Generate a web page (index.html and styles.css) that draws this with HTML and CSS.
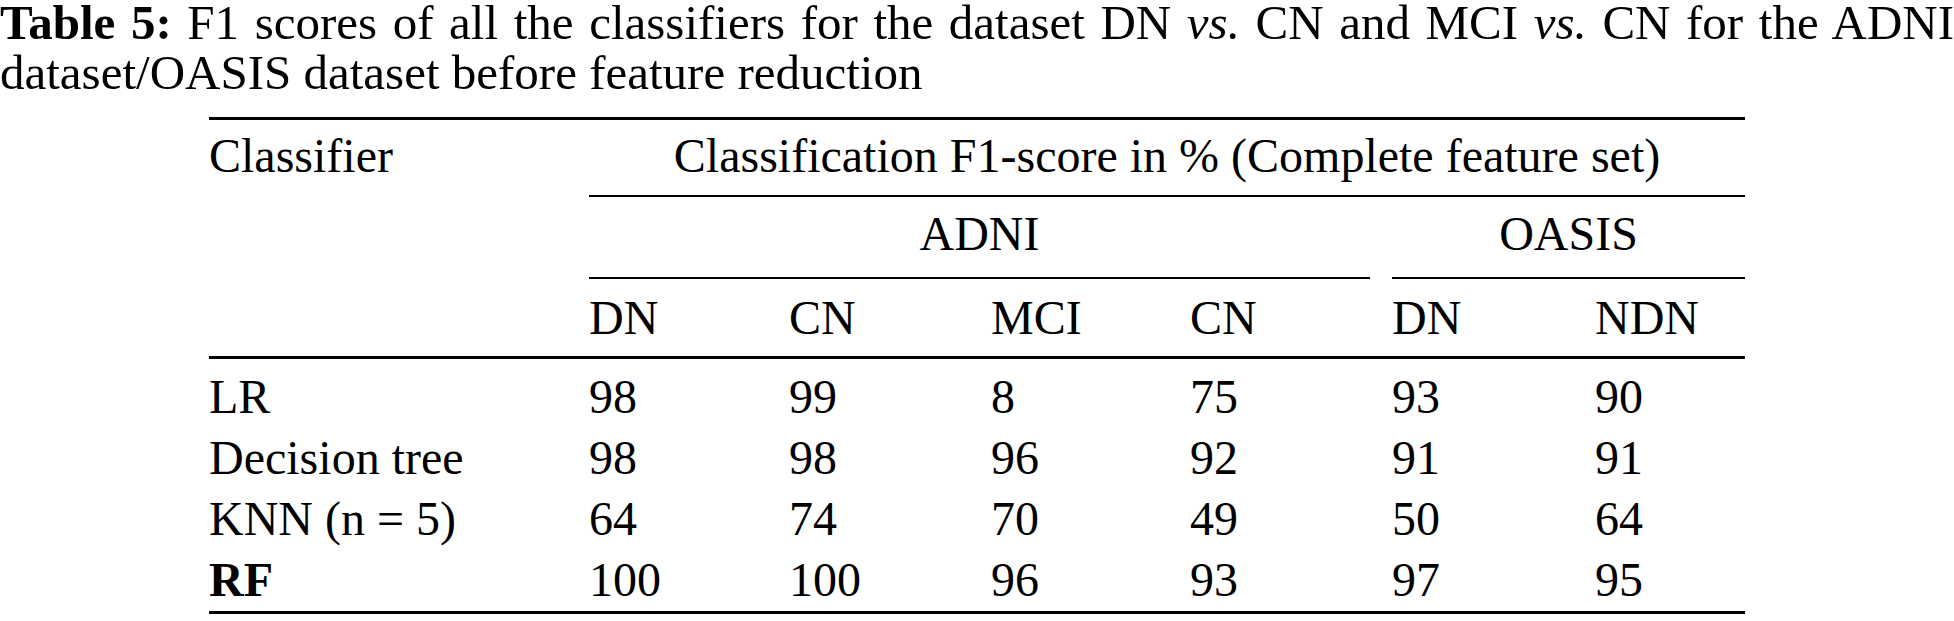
FILE: index.html
```html
<!DOCTYPE html>
<html lang="en">
<head>
    <meta charset="UTF-8">
    <meta name="viewport" content="width=device-width, initial-scale=1.0">
    <title>Table 5</title>
    <link rel="stylesheet" href="styles.css">
</head>
<body>
    <p class="caption"><b>Table 5:</b> F1 scores of all the classifiers for the dataset DN <i>vs.</i> CN and MCI <i>vs.</i> CN for the ADNI dataset/OASIS dataset before feature reduction</p>

    <table class="results">
        <colgroup>
            <col class="c-name">
            <col class="c-a">
            <col class="c-b">
            <col class="c-c">
            <col class="c-d">
            <col class="c-e">
            <col class="c-f">
        </colgroup>
        <thead>
            <tr>
                <th rowspan="3" class="name-head">Classifier</th>
                <th colspan="6" class="top-head">Classification F1-score in % (Complete feature set)</th>
            </tr>
            <tr>
                <th colspan="4" class="group"><div class="cmid trim">ADNI</div></th>
                <th colspan="2" class="group"><div class="cmid">OASIS</div></th>
            </tr>
            <tr class="sub">
                <th>DN</th>
                <th>CN</th>
                <th>MCI</th>
                <th>CN</th>
                <th>DN</th>
                <th>NDN</th>
            </tr>
        </thead>
        <tbody>
            <tr>
                <td>LR</td><td>98</td><td>99</td><td>8</td><td>75</td><td>93</td><td>90</td>
            </tr>
            <tr>
                <td>Decision tree</td><td>98</td><td>98</td><td>96</td><td>92</td><td>91</td><td>91</td>
            </tr>
            <tr>
                <td>KNN (n = 5)</td><td>64</td><td>74</td><td>70</td><td>49</td><td>50</td><td>64</td>
            </tr>
            <tr>
                <td><b>RF</b></td><td>100</td><td>100</td><td>96</td><td>93</td><td>97</td><td>95</td>
            </tr>
        </tbody>
    </table>
</body>
</html>
```

FILE: styles.css
```css
body {
    margin: 0;
    background-color: #fff;
    color: #000;
    font-family: "Liberation Serif", "Times New Roman", serif;
}
.caption {
    margin: -2px 0 0;
    font-size: 49px;
    line-height: 50px;
    text-align: justify;
}
.results {
    margin: 19px 0 0 209px;
    width: 1536px;
    table-layout: fixed;
    border-collapse: separate;
    border-spacing: 0;
    border-top: 3px solid #000;
    border-bottom: 3px solid #000;
    font-size: 48px;
    line-height: 46px;
}
.c-name { width: 380px; }
.c-a { width: 200px; }
.c-b { width: 202px; }
.c-c { width: 199px; }
.c-d { width: 202px; }
.c-e { width: 203px; }
.c-f { width: 150px; }
th {
    font-weight: normal;
    text-align: left;
    padding: 0;
    white-space: nowrap;
}
.name-head {
    vertical-align: top;
    padding-top: 13px;
    border-bottom: 3px solid #000;
}
.top-head {
    text-align: center;
    padding: 13px 0 16px;
    border-bottom: 2px solid #000;
}
.group {
    text-align: center;
}
.cmid {
    padding: 14px 0 20px;
    border-bottom: 2px solid #000;
}
.cmid.trim {
    margin-right: 22px;
}
.sub th {
    padding: 16px 0 15px;
    border-bottom: 3px solid #000;
}
td {
    padding: 7px 0 8px;
    white-space: nowrap;
}
tbody tr:first-child td {
    padding-top: 15px;
}
```
